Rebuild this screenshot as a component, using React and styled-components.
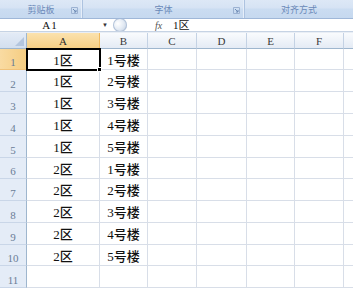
import React from "react";
import styled, { createGlobalStyle } from "styled-components";

const GlobalStyle = createGlobalStyle`
  html, body { margin: 0; padding: 0; background: #ffffff; }
  body { width: 353px; height: 288px; overflow: hidden; font-family: "Liberation Serif", "Noto Sans CJK SC", serif; }
`;

const columns = [
  { key: "A", width: 73 },
  { key: "B", width: 48 },
  { key: "C", width: 49 },
  { key: "D", width: 50 },
  { key: "E", width: 48 },
  { key: "F", width: 49 },
  { key: "", width: 40 },
];

const rowHeights = [21, 22, 22, 22, 22, 21, 22, 22, 22, 21, 22];

const data = [
  ["1区", "1号楼"],
  ["1区", "2号楼"],
  ["1区", "3号楼"],
  ["1区", "4号楼"],
  ["1区", "5号楼"],
  ["2区", "1号楼"],
  ["2区", "2号楼"],
  ["2区", "3号楼"],
  ["2区", "4号楼"],
  ["2区", "5号楼"],
  ["", ""],
];

function Launcher() {
  return (
    <svg width="7" height="7" viewBox="0 0 7 7">
      <path d="M0.5 0.5H6.5V6.5H0.5Z" fill="none" stroke="#9cb2d2" strokeWidth="1" />
      <path d="M2 2L5 5M5 3V5H3" fill="none" stroke="#6d8ab4" strokeWidth="1" />
    </svg>
  );
}

export default function App() {
  return (
    <>
      <GlobalStyle />
      <Page>
        <Ribbon>
          <Group $width={83}>
            <GroupLabel>剪贴板</GroupLabel>
            <LauncherSlot><Launcher /></LauncherSlot>
          </Group>
          <Group $width={162}>
            <GroupLabel>字体</GroupLabel>
            <LauncherSlot><Launcher /></LauncherSlot>
          </Group>
          <Group $width={120} $last>
            <GroupLabel>对齐方式</GroupLabel>
          </Group>
        </Ribbon>

        <FormulaBar>
          <NameBox>A1</NameBox>
          <DropArrow>▼</DropArrow>
          <RoundButton />
          <Fx>fx</Fx>
          <FormulaText>1区</FormulaText>
        </FormulaBar>

        <Sheet $cols={columns.map((c) => c.width + "px").join(" ")} $rows={["16px", ...rowHeights.map((h) => h + "px")].join(" ")}>
          <Corner>
            <svg width="9" height="9" viewBox="0 0 9 9">
              <path d="M9 0V9H0Z" fill="#b4c6de" />
            </svg>
          </Corner>
          {columns.map((c, i) => (
            <ColHead key={i} $active={i === 0}>{c.key}</ColHead>
          ))}
          {data.map((row, r) => (
            <React.Fragment key={r}>
              <RowHead $active={r === 0}>{r + 1}</RowHead>
              {columns.map((c, ci) => (
                <Cell key={ci} $selected={r === 0 && ci === 0}>
                  {ci < 2 ? row[ci] : ""}
                </Cell>
              ))}
            </React.Fragment>
          ))}
        </Sheet>
      </Page>
    </>
  );
}

const Page = styled.div`
  width: 353px;
  height: 288px;
  overflow: hidden;
  display: flex;
  flex-direction: column;
`;

const Ribbon = styled.div`
  height: 22px;
  display: flex;
  background: linear-gradient(to bottom, #dde8f6 0px, #d6e3f4 8px, #cadcf1 9px, #c4d7ee 22px);
  border-bottom: 1px solid #9fb7d8;
`;

const Group = styled.div`
  position: relative;
  width: ${(p) => p.$width}px;
  flex: ${(p) => (p.$last ? "1" : "none")};
  display: flex;
  align-items: flex-end;
  justify-content: center;
  padding-bottom: 3px;
  box-sizing: border-box;
  border-right: ${(p) => (p.$last ? "none" : "1px solid #adc3e0")};
  box-shadow: ${(p) => (p.$last ? "none" : "inset -1px 0 0 #e6eef9")};
`;

const GroupLabel = styled.span`
  font-family: "Noto Sans CJK SC", sans-serif;
  font-size: 9px;
  line-height: 10px;
  color: #6a89b8;
`;

const LauncherSlot = styled.span`
  position: absolute;
  right: 4px;
  bottom: 4px;
  display: flex;
`;

const FormulaBar = styled.div`
  height: 14px;
  display: flex;
  align-items: center;
  background: #ffffff;
  border-bottom: 1px solid #c6d3e4;
  overflow: hidden;
`;

const NameBox = styled.div`
  width: 100px;
  text-align: center;
  font-size: 11px;
  line-height: 13px;
  color: #111;
  letter-spacing: 1px;
`;

const DropArrow = styled.span`
  width: 8px;
  font-size: 6px;
  color: #333;
  text-align: center;
  margin-left: 1px;
`;

const RoundButton = styled.span`
  width: 14px;
  height: 14px;
  margin-left: 4px;
  border-radius: 50%;
  background: radial-gradient(circle at 35% 40%, #ffffff 0%, #e4ebf4 45%, #b9c8dc 100%);
  box-shadow: inset 0 0 0 1px #b3c3d9;
`;

const Fx = styled.span`
  margin-left: 28px;
  font-style: italic;
  font-size: 10px;
  line-height: 13px;
  color: #555;
  width: 18px;
`;

const FormulaText = styled.span`
  font-size: 11px;
  line-height: 13px;
  color: #111;
`;

const Sheet = styled.div`
  display: grid;
  grid-template-columns: 27px ${(p) => p.$cols};
  grid-template-rows: ${(p) => p.$rows};
  background: #ffffff;
  border-top: 1px solid #e9eef5;
`;

const Corner = styled.div`
  box-sizing: border-box;
  background: linear-gradient(to bottom, #e3ebf6, #d3dfef);
  border-right: 1px solid #9eb6ce;
  border-bottom: 1px solid #9eb6ce;
  display: flex;
  align-items: flex-end;
  justify-content: flex-end;
  padding: 0 2px 2px 0;
`;

const ColHead = styled.div`
  box-sizing: border-box;
  display: flex;
  align-items: center;
  justify-content: center;
  font-size: 11px;
  color: ${(p) => (p.$active ? "#2d2d2d" : "#3a3a3a")};
  background: ${(p) =>
    p.$active
      ? "linear-gradient(to bottom, #fbe2ae, #f6cf85)"
      : "linear-gradient(to bottom, #f9fbfd, #e4ebf5)"};
  border-right: 1px solid ${(p) => (p.$active ? "#f0b95e" : "#c4d2e4")};
  border-bottom: 1px solid ${(p) => (p.$active ? "#f2a73f" : "#9eb6ce")};
`;

const RowHead = styled.div`
  box-sizing: border-box;
  display: flex;
  align-items: flex-end;
  justify-content: center;
  padding-bottom: 1px;
  font-size: 11px;
  color: #6a7c96;
  background: ${(p) => (p.$active ? "linear-gradient(to right, #f9dba2, #f5cd82)" : "#e4ecf7")};
  border-right: 1px solid ${(p) => (p.$active ? "#f2a73f" : "#9eb6ce")};
  border-bottom: 1px solid ${(p) => (p.$active ? "#f0c27a" : "#c9d6e8")};
`;

const Cell = styled.div`
  position: relative;
  box-sizing: border-box;
  display: flex;
  align-items: center;
  justify-content: center;
  font-family: "Liberation Serif", "Noto Sans CJK SC", serif;
  font-size: 13px;
  font-weight: 500;
  color: #111;
  border-right: 1px solid #d8dee8;
  border-bottom: 1px solid #d8dee8;
  ${(p) =>
    p.$selected &&
    `
    z-index: 2;
    outline: 2px solid #000;
    outline-offset: -1px;
    &::after {
      content: "";
      position: absolute;
      right: -3px;
      bottom: -3px;
      width: 5px;
      height: 5px;
      background: #000;
      border: 1px solid #fff;
      box-sizing: border-box;
    }
  `}
`;
